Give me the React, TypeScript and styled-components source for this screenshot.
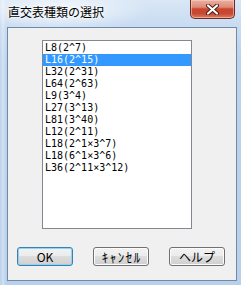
import React from "react";
import styled, { createGlobalStyle } from "styled-components";

const Global = createGlobalStyle`
  html, body { margin: 0; padding: 0; background: #ffffff; }
  body { width: 241px; height: 285px; overflow: hidden; }
`;

const Window = styled.div`
  width: 241px;
  height: 285px;
  box-sizing: border-box;
  display: flex;
  flex-direction: column;
  background:
    radial-gradient(ellipse 90px 22px at 60px 10px, rgba(255,255,255,0.75), rgba(255,255,255,0) 100%),
    linear-gradient(to right, rgba(255,255,255,0.0) 0px, rgba(255,255,255,0.35) 3px, rgba(255,255,255,0) 6px),
    linear-gradient(to bottom, #d9e7f6 0px, #c9dcf1 24px, #bcd3ec 60px, #b8d0ea 100%);
  font-family: "Noto Sans CJK JP", "Liberation Sans", sans-serif;
`;

const TitleBar = styled.div`
  height: 27px;
  display: flex;
  align-items: flex-start;
  justify-content: space-between;
  flex-shrink: 0;
`;

const Title = styled.div`
  margin: 4px 0 0 8px;
  font-size: 12px;
  line-height: 16px;
  color: #000000;
  text-shadow: 0 0 6px rgba(255,255,255,1), 0 0 3px rgba(255,255,255,1);
`;

const CloseButton = styled.div`
  width: 45px;
  height: 19px;
  margin-right: 6px;
  box-sizing: border-box;
  border: 1px solid #6b2a22;
  border-top: none;
  border-radius: 0 0 5px 5px;
  background: linear-gradient(to bottom, #eab1a3 0%, #dd8a75 40%, #c9442d 50%, #c64a32 75%, #db7a5e 100%);
  box-shadow: inset 0 0 0 1px rgba(255, 210, 200, 0.55);
  display: flex;
  align-items: center;
  justify-content: center;
`;

const Client = styled.div`
  flex: 1;
  margin: 0 4px 4px 7px;
  border: 1px solid #6e8aa8;
  background: #f0f0f0;
  display: flex;
  flex-direction: column;
`;

const ListBox = styled.div`
  margin: 12px 0 0 34px;
  width: 150px;
  height: 189px;
  box-sizing: border-box;
  border: 1px solid #828790;
  background: #ffffff;
  padding-top: 1px;
  display: flex;
  flex-direction: column;
`;

const Row = styled.div<{ $selected?: boolean }>`
  height: 12px;
  line-height: 12px;
  padding-left: 2px;
  font-family: "DejaVu Sans Mono", "Liberation Mono", monospace;
  font-size: 10px;
  white-space: nowrap;
  color: ${(p) => (p.$selected ? "#ffffff" : "#000000")};
  background: ${(p) => (p.$selected ? "#3399ff" : "transparent")};
`;

const ButtonRow = styled.div`
  display: flex;
  margin: 18px 0 0 9px;
  gap: 20px;
`;

const Button = styled.div<{ $default?: boolean }>`
  width: 56px;
  height: 19px;
  box-sizing: border-box;
  border: 1px solid ${(p) => (p.$default ? "#3c7fb1" : "#707070")};
  border-radius: 3px;
  background: linear-gradient(to bottom, #f2f2f2 0%, #ebebeb 50%, #dddddd 50%, #cfcfcf 100%);
  box-shadow: ${(p) =>
    p.$default ? "inset 0 0 0 1px #8fd3f5" : "inset 0 0 0 1px #fcfcfc"};
  display: flex;
  align-items: center;
  justify-content: center;
  font-size: 12px;
  line-height: 14px;
  color: #000000;
  font-family: "Noto Sans CJK JP", "Liberation Sans", sans-serif;
  white-space: nowrap;
`;

const Kana = styled.span`
  font-size: 13px;
  letter-spacing: 1.5px;
  margin-right: -1.5px;
`;

const items = [
  "L8(2^7)",
  "L16(2^15)",
  "L32(2^31)",
  "L64(2^63)",
  "L9(3^4)",
  "L27(3^13)",
  "L81(3^40)",
  "L12(2^11)",
  "L18(2^1×3^7)",
  "L18(6^1×3^6)",
  "L36(2^11×3^12)",
];

export default function App() {
  return (
    <>
      <Global />
      <Window>
        <TitleBar>
          <Title>直交表種類の選択</Title>
          <CloseButton>
            <svg width="13" height="11" viewBox="0 0 13 11">
              <path d="M2 1.5 L11 9.5 M11 1.5 L2 9.5" stroke="#4a1a14" strokeWidth="4" strokeLinecap="round" />
              <path d="M2 1.5 L11 9.5 M11 1.5 L2 9.5" stroke="#ffffff" strokeWidth="2.2" strokeLinecap="round" />
            </svg>
          </CloseButton>
        </TitleBar>
        <Client>
          <ListBox>
            {items.map((t, i) => (
              <Row key={i} $selected={i === 1}>
                {t}
              </Row>
            ))}
          </ListBox>
          <ButtonRow>
            <Button $default>OK</Button>
            <Button>
              <Kana>ｷｬﾝｾﾙ</Kana>
            </Button>
            <Button>ヘルプ</Button>
          </ButtonRow>
        </Client>
      </Window>
    </>
  );
}
